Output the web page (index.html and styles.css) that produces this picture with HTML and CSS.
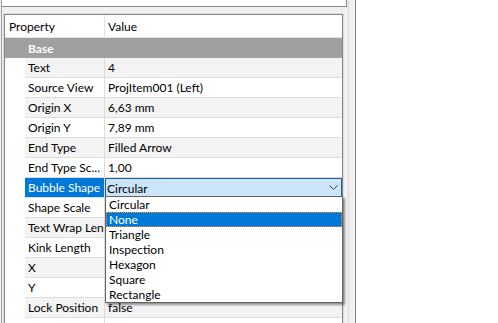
FILE: index.html
```html
<!DOCTYPE html>
<html lang="en">
<head>
  <meta charset="UTF-8" />
  <title>Properties</title>
  <link rel="stylesheet" href="styles.css">
</head>
<body>
  <div class="app">
    <div class="pane">
      <div class="side">
        <div class="top-box"></div>
        <div class="frame">
          <div class="props">
            <div class="head">
              <div class="h-name">Property</div>
              <div class="h-value">Value</div>
            </div>
            <div class="group">Base</div>

            <div class="row alt"><div class="indent"></div><div class="name">Text</div><div class="value">4</div></div>
            <div class="row"><div class="indent"></div><div class="name">Source View</div><div class="value">ProjItem001 (Left)</div></div>
            <div class="row alt"><div class="indent"></div><div class="name">Origin X</div><div class="value">6,63 mm</div></div>
            <div class="row"><div class="indent"></div><div class="name">Origin Y</div><div class="value">7,89 mm</div></div>
            <div class="row alt"><div class="indent"></div><div class="name">End Type</div><div class="value">Filled Arrow</div></div>
            <div class="row"><div class="indent"></div><div class="name">End Type Sc...</div><div class="value">1,00</div></div>

            <!-- selected row with open combo -->
            <div class="row sel">
              <div class="indent"></div>
              <div class="name">Bubble Shape</div>
              <div class="combo">
                Circular
                <svg class="chevron" width="9" height="5" viewBox="0 0 9 5">
                  <path d="M0.5 0.5 L4.5 4.5 L8.5 0.5" fill="none" stroke="#404040" stroke-width="1"/>
                </svg>
                <ul class="dropdown">
                  <li>Circular</li>
                  <li class="on">None</li>
                  <li>Triangle</li>
                  <li>Inspection</li>
                  <li>Hexagon</li>
                  <li>Square</li>
                  <li>Rectangle</li>
                </ul>
              </div>
            </div>

            <div class="row"><div class="indent"></div><div class="name">Shape Scale</div><div class="value"></div></div>
            <div class="row alt"><div class="indent"></div><div class="name">Text Wrap Len</div><div class="value"></div></div>
            <div class="row"><div class="indent"></div><div class="name">Kink Length</div><div class="value"></div></div>
            <div class="row alt"><div class="indent"></div><div class="name">X</div><div class="value"></div></div>
            <div class="row"><div class="indent"></div><div class="name">Y</div><div class="value"></div></div>
            <div class="row alt"><div class="indent"></div><div class="name">Lock Position</div><div class="value">false</div></div>
            <div class="row"><div class="indent"></div><div class="name"></div><div class="value"></div></div>
          </div>
        </div>
      </div>
    </div>
    <div class="canvas"></div>
  </div>
</body>
</html>
```

FILE: styles.css
```css
* {
  margin: 0;
  padding: 0;
  box-sizing: border-box;
}

body {
  font-family: Lato, "Segoe UI", sans-serif;
  font-size: 12px;
  color: #000;
  background-color: #fff;
  width: 498px;
  height: 323px;
  overflow: hidden;
}

.app {
  display: flex;
  height: 323px;
}

.pane {
  display: flex;
  width: 356px;
  height: 100%;
  padding-left: 1px;
  background-color: #f0f0f0;
  border-right: 1px solid #828790;
}

.side {
  display: flex;
  flex-direction: column;
  width: 348px;
  border-left: 1px solid #a0a0a0;
  border-right: 1px solid #dadada;
}

.top-box {
  flex-shrink: 0;
  width: 345px;
  height: 7px;
  background-color: #fff;
  border-right: 1px solid #828790;
  border-bottom: 1px solid #828790;
}

.frame {
  flex: 1;
  min-height: 0;
  width: 341px;
  margin: 6px 0 0 1px;
  border: 1px solid #dcdcdc;
  border-bottom: none;
}

.props {
  height: 100%;
  background-color: #fff;
  border: 1px solid #828790;
  border-bottom: none;
}

.head {
  display: flex;
  height: 23px;
  border-bottom: 1px solid #e3e3e3;
}

.h-name {
  width: 100px;
  padding: 2px 0 0 4px;
  line-height: 20px;
  border-right: 1px solid #e3e3e3;
}

.h-value {
  padding: 2px 0 0 3px;
  line-height: 20px;
}

.group {
  height: 20px;
  padding: 1px 0 0 23px;
  line-height: 19px;
  background-color: #a0a0a0;
  color: #fff;
  font-weight: bold;
}

.row {
  display: flex;
  height: 20px;
}

.indent {
  width: 20px;
  background-color: #fff;
}

.name {
  width: 80px;
  padding: 1px 0 0 3px;
  line-height: 18px;
  white-space: nowrap;
  overflow: hidden;
  border-right: 1px solid #dcdcdc;
  border-bottom: 1px solid #dcdcdc;
}

.value {
  flex: 1;
  padding: 1px 0 0 3px;
  line-height: 18px;
  white-space: nowrap;
  border-bottom: 1px solid #dcdcdc;
}

.row.alt .name,
.row.alt .value {
  background-color: #f3f3f3;
}

.row.sel .name {
  background-color: #0078d7;
  color: #fff;
}

.combo {
  flex: 1;
  position: relative;
  padding: 1px 0 0 1px;
  line-height: 17px;
  background-color: #cce4f7;
  border: 1px solid #1f5e9c;
}

.chevron {
  position: absolute;
  top: 6px;
  right: 3px;
}

.dropdown {
  position: absolute;
  top: 17px;
  left: -1px;
  width: 238px;
  list-style: none;
  background-color: #fff;
  border: 1px solid #646464;
  box-shadow: 2px 2px 2px rgba(0, 0, 0, 0.4);
  z-index: 2;
}

.dropdown li {
  height: 15px;
  padding-left: 3px;
  line-height: 15px;
}

.dropdown li.on {
  background-color: #0078d7;
  color: #fff;
  outline: 1px dotted #f7941d;
  outline-offset: -1px;
}

.canvas {
  flex: 1;
  background-color: #fff;
}
```
